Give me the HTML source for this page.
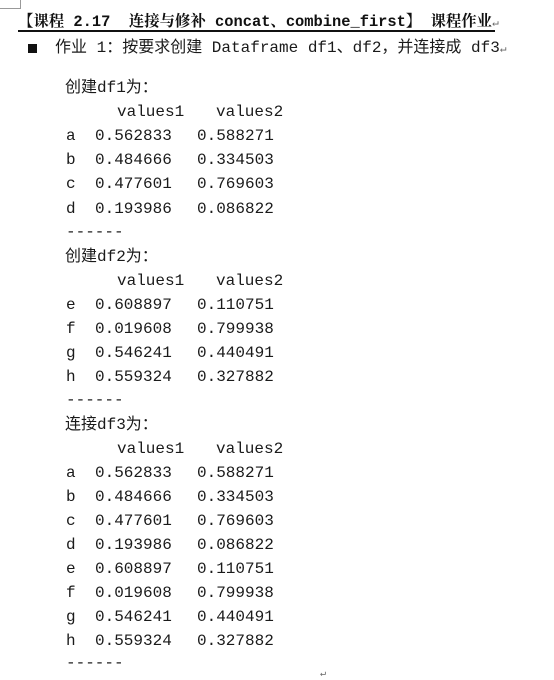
<!DOCTYPE html>
<html><head><meta charset="utf-8"><style>
body{margin:0;width:554px;height:680px;background:#fff;position:relative;overflow:hidden;font-family:"Liberation Mono","Noto Sans CJK SC",monospace;color:#1a1a1a}
.r{position:absolute;height:24px;line-height:24px;font-size:16px;white-space:pre}
.c{font-family:"Liberation Mono","Noto Sans CJK SC",monospace}
s{position:absolute;text-decoration:none}
.t{position:absolute;left:18px;top:9px;font-size:15.4px;font-weight:bold;font-family:"Liberation Mono","Noto Serif CJK SC",monospace;white-space:pre;color:#111}
.u{position:absolute;left:18px;top:30px;width:477px;height:1.5px;background:#111}
</style></head><body>
<div style="position:absolute;left:0;top:0;width:20px;height:8px;border-right:1px solid #999;border-bottom:1px solid #999"></div>
<div class="t">【课程 2.17  连接与修补 concat、combine_first】 课程作业<span style="font-weight:normal;font-size:11px;color:#666">↵</span></div>
<div class="u"></div>
<div style="position:absolute;left:28px;top:44px;width:9px;height:9px;background:#111"></div>
<div class="r c" style="left:55px;top:36px;font-size:16px">作业 1：按要求创建 Dataframe df1、df2，并连接成 df3<span style="font-size:11px;color:#666">↵</span></div>

<div class="r c" style="left:65px;top:76px">创建df1为：</div>
<div class="r" style="top:100px"><s style="left:117px">values1</s><s style="left:216px">values2</s></div>
<div class="r" style="top:124px"><s style="left:66px">a</s><s style="left:95px">0.562833</s><s style="left:197px">0.588271</s></div>
<div class="r" style="top:148px"><s style="left:66px">b</s><s style="left:95px">0.484666</s><s style="left:197px">0.334503</s></div>
<div class="r" style="top:172px"><s style="left:66px">c</s><s style="left:95px">0.477601</s><s style="left:197px">0.769603</s></div>
<div class="r" style="top:197px"><s style="left:66px">d</s><s style="left:95px">0.193986</s><s style="left:197px">0.086822</s></div>
<div class="r" style="top:220px"><s style="left:66px">------</s></div>

<div class="r c" style="left:65px;top:245px">创建df2为：</div>
<div class="r" style="top:269px"><s style="left:117px">values1</s><s style="left:216px">values2</s></div>
<div class="r" style="top:293px"><s style="left:66px">e</s><s style="left:95px">0.608897</s><s style="left:197px">0.110751</s></div>
<div class="r" style="top:317px"><s style="left:66px">f</s><s style="left:95px">0.019608</s><s style="left:197px">0.799938</s></div>
<div class="r" style="top:341px"><s style="left:66px">g</s><s style="left:95px">0.546241</s><s style="left:197px">0.440491</s></div>
<div class="r" style="top:365px"><s style="left:66px">h</s><s style="left:95px">0.559324</s><s style="left:197px">0.327882</s></div>
<div class="r" style="top:388px"><s style="left:66px">------</s></div>

<div class="r c" style="left:65px;top:413px">连接df3为：</div>
<div class="r" style="top:437px"><s style="left:117px">values1</s><s style="left:216px">values2</s></div>
<div class="r" style="top:461px"><s style="left:66px">a</s><s style="left:95px">0.562833</s><s style="left:197px">0.588271</s></div>
<div class="r" style="top:485px"><s style="left:66px">b</s><s style="left:95px">0.484666</s><s style="left:197px">0.334503</s></div>
<div class="r" style="top:509px"><s style="left:66px">c</s><s style="left:95px">0.477601</s><s style="left:197px">0.769603</s></div>
<div class="r" style="top:533px"><s style="left:66px">d</s><s style="left:95px">0.193986</s><s style="left:197px">0.086822</s></div>
<div class="r" style="top:557px"><s style="left:66px">e</s><s style="left:95px">0.608897</s><s style="left:197px">0.110751</s></div>
<div class="r" style="top:581px"><s style="left:66px">f</s><s style="left:95px">0.019608</s><s style="left:197px">0.799938</s></div>
<div class="r" style="top:605px"><s style="left:66px">g</s><s style="left:95px">0.546241</s><s style="left:197px">0.440491</s></div>
<div class="r" style="top:629px"><s style="left:66px">h</s><s style="left:95px">0.559324</s><s style="left:197px">0.327882</s></div>
<div class="r" style="top:651px"><s style="left:66px">------</s></div>
<div style="position:absolute;left:320px;top:668px;font-size:10px;color:#666">↵</div>
</body></html>
